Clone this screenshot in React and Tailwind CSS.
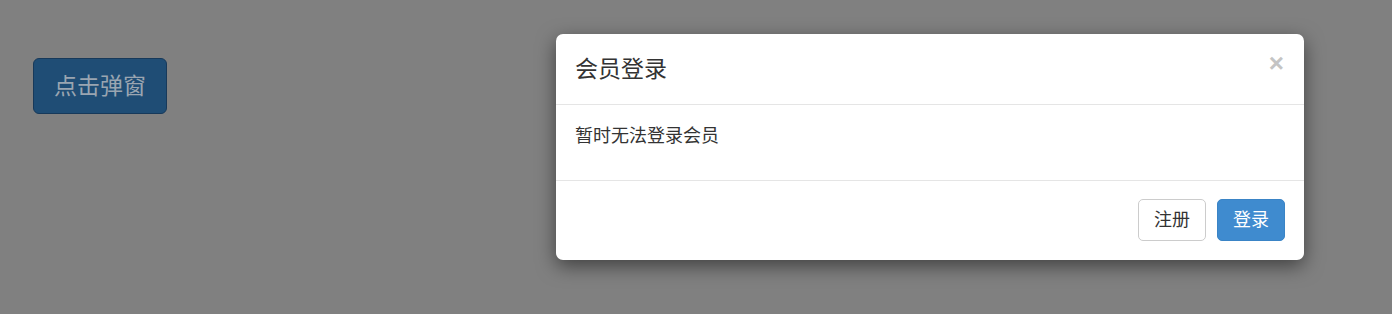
export default function App() {
  const font = { fontFamily: '"Liberation Sans", "Noto Sans CJK SC", sans-serif' };
  return (
    <div className="relative h-[314px] w-full bg-[#808080] overflow-hidden" style={font}>
      <div className="pl-[33px] pt-[58px]">
        <button className="h-[56px] w-[134px] rounded-[6px] border border-[#17395a] bg-[#1f4d75] text-[23px] leading-[30px] text-[#9aa5b1]">
          点击弹窗
        </button>
      </div>

      {/* modal */}
      <div className="absolute left-[556px] top-[34px] w-[748px] rounded-[7px] bg-white shadow-[0_6px_19px_rgba(0,0,0,0.5)]">
        <div className="flex items-start justify-between border-b border-[#e5e5e5] p-[19px]">
          <h4 className="text-[23px] font-normal leading-[32px] text-[#333]">会员登录</h4>
          <span className="-mt-[3px] mr-[1px] text-[26px] font-bold leading-[26px] text-[#c4c4c4]">×</span>
        </div>
        <div className="px-[19px] pt-[19px] pb-[31px] text-[18px] leading-[25px] text-[#333]">
          暂时无法登录会员
        </div>
        <div className="flex justify-end gap-[11px] border-t border-[#e5e5e5] px-[19px] pt-[18px] pb-[19px]">
          <button className="h-[42px] w-[68px] rounded-[5px] border border-[#ccc] bg-white text-[18px] text-[#333]">
            注册
          </button>
          <button className="h-[42px] w-[68px] rounded-[5px] border border-[#3a84c6] bg-[#3f8bcf] text-[18px] text-white">
            登录
          </button>
        </div>
      </div>
    </div>
  );
}
